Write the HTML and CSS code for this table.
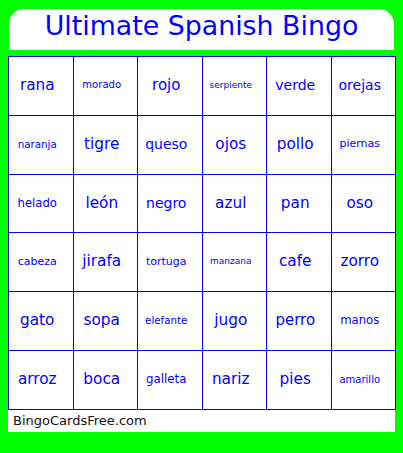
FILE: index.html
```html
<!DOCTYPE html>
<html>
<head>
<meta charset="utf-8">
<link rel="stylesheet" href="styles.css">
</head>
<body>
<div class="card">
  <div class="header"><h1 class="title">Ultimate Spanish Bingo</h1></div>
  <div class="grid">
    <div class="cell s153">rana</div>
    <div class="cell s101">morado</div>
    <div class="cell s150">rojo</div>
    <div class="cell s90">serpiente</div>
    <div class="cell s140">verde</div>
    <div class="cell s140">orejas</div>

    <div class="cell s103">naranja</div>
    <div class="cell s153">tigre</div>
    <div class="cell s140">queso</div>
    <div class="cell s153">ojos</div>
    <div class="cell s153">pollo</div>
    <div class="cell s110">piernas</div>

    <div class="cell s116">helado</div>
    <div class="cell s153">león</div>
    <div class="cell s140">negro</div>
    <div class="cell s153">azul</div>
    <div class="cell s153">pan</div>
    <div class="cell s153">oso</div>

    <div class="cell s110">cabeza</div>
    <div class="cell s153">jirafa</div>
    <div class="cell s110">tortuga</div>
    <div class="cell s90">manzana</div>
    <div class="cell s153">cafe</div>
    <div class="cell s153">zorro</div>

    <div class="cell s153">gato</div>
    <div class="cell s153">sopa</div>
    <div class="cell s103">elefante</div>
    <div class="cell s153">jugo</div>
    <div class="cell s150">perro</div>
    <div class="cell s116">manos</div>

    <div class="cell s153">arroz</div>
    <div class="cell s153">boca</div>
    <div class="cell s118">galleta</div>
    <div class="cell s153">nariz</div>
    <div class="cell s153">pies</div>
    <div class="cell s100">amarillo</div>
  </div>
  <div class="footer">BingoCardsFree.com</div>
</div>
</body>
</html>
```

FILE: styles.css
```css
html, body {
  margin: 0;
  padding: 0;
}
body {
  background: #00ff00;
  width: 403px;
  height: 453px;
  overflow: hidden;
  font-family: "DejaVu Sans", sans-serif;
}
.card {
  padding: 9px 0 0 8px;
  width: 388px;
}
.header {
  margin-left: 1px;
  width: 385px;
  height: 41px;
  background: #ffffff;
  border-radius: 15px 15px 0 0;
  display: flex;
  align-items: flex-start;
  justify-content: center;
}
.title {
  margin: 0;
  padding-top: 1px;
  font-weight: normal;
  font-size: 26.8px;
  line-height: 32px;
  color: #0000ff;
}
.grid {
  margin-top: 6px;
  width: 388px;
  height: 354px;
  box-sizing: border-box;
  background: #0000ff;
  padding: 1px;
  display: grid;
  grid-template-columns: repeat(6, 1fr);
  grid-template-rows: repeat(6, 1fr);
  gap: 1px;
}
.cell {
  background: #ffffff;
  color: #0000ff;
  display: flex;
  align-items: center;
  justify-content: center;
  padding: 0 7px 2px 0;
  white-space: nowrap;
}
.s153 { font-size: 15.3px; }
.s150 { font-size: 15px; }
.s140 { font-size: 14px; }
.s118 { font-size: 11.8px; }
.s116 { font-size: 11.6px; }
.s110 { font-size: 11px; }
.s103 { font-size: 10.3px; }
.s101 { font-size: 10.1px; }
.s100 { font-size: 10px; }
.s90 { font-size: 9px; }
.footer {
  width: 387px;
  height: 22px;
  background: #ffffff;
  color: #111111;
  font-size: 13px;
  line-height: 22px;
  padding-left: 5px;
  box-sizing: border-box;
}
```
